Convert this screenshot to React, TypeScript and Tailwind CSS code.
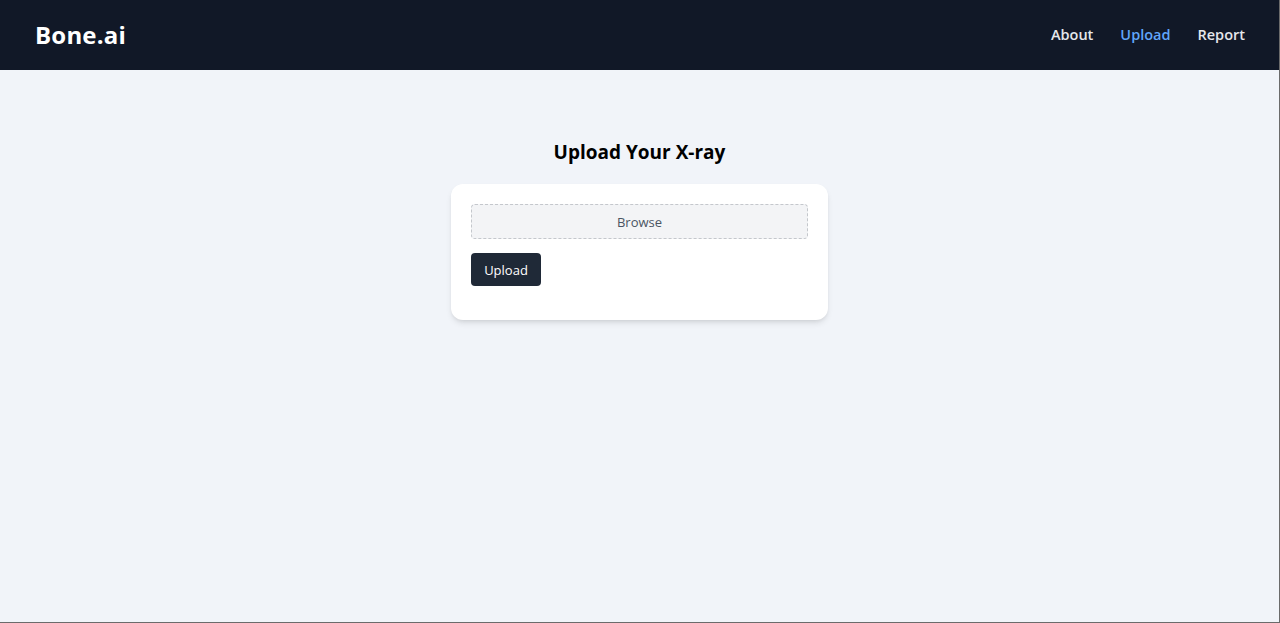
import React from "react";

export default function App() {
  return (
    <div
      className="min-h-[623px] h-[623px] flex flex-col bg-[#f1f4f9] border-r border-b border-[#6b6b6b]"
      style={{ fontFamily: '"Open Sans", "Noto Sans", sans-serif' }}
    >
      <header className="h-[70px] bg-[#111827] flex items-center justify-between pl-[35px] pr-[34px] shrink-0">
        <div className="text-white text-[24px] font-bold tracking-[0.2px]">Bone.ai</div>
        <nav className="flex items-center gap-[27px] text-[14.5px] font-semibold">
          <a className="text-[#e5e7eb]">About</a>
          <a className="text-[#60a5fa]">Upload</a>
          <a className="text-[#e5e7eb]">Report</a>
        </nav>
      </header>
      <main className="flex flex-col items-center pt-[68px]">
        <h2 className="text-[19px] font-bold text-black leading-[28px]">Upload Your X-ray</h2>
        <div className="mt-[18px] w-[377px] bg-white rounded-xl shadow-md px-5 pt-5 pb-[34px]">
          <div className="h-[35px] pt-[2px] bg-[#f3f4f6] border border-dashed border-[#c4c7cc] rounded flex items-center justify-center text-[13px] text-[#4b5563]">
            Browse
          </div>
          <button className="mt-[14px] h-[33px] w-[70px] pt-[2px] bg-[#1f2937] text-white text-[13px] rounded flex items-center justify-center">
            Upload
          </button>
        </div>
      </main>
    </div>
  );
}
